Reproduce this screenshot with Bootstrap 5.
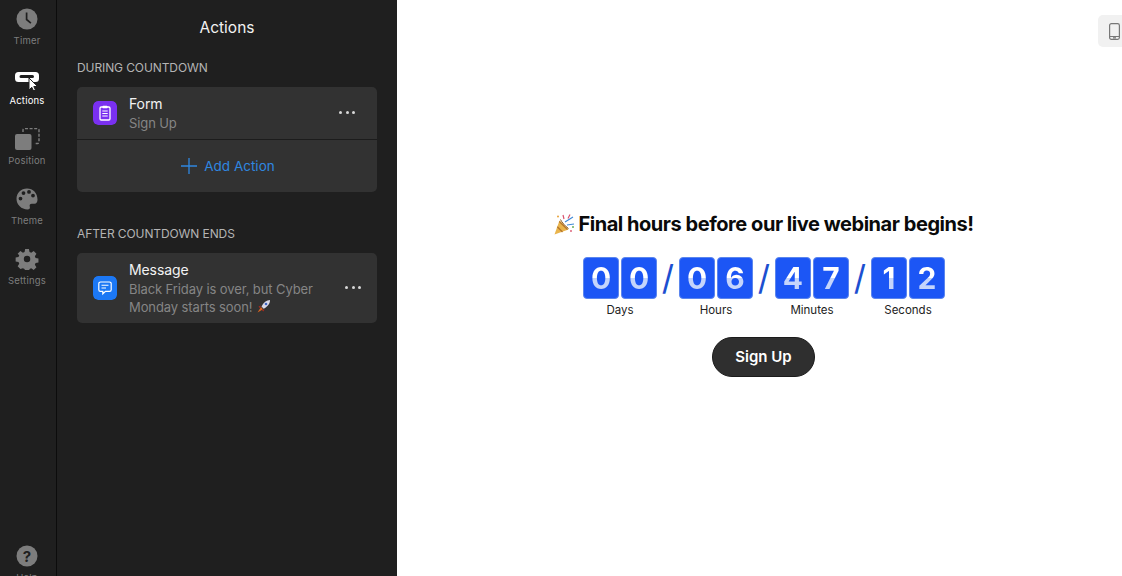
<!DOCTYPE html>
<html lang="en">
<head>
<meta charset="utf-8">
<title>Actions</title>
<link href="https://cdn.jsdelivr.net/npm/bootstrap@5.3.0/dist/css/bootstrap.min.css" rel="stylesheet">
<style>
html,body{height:100%;overflow:hidden}
body{font-family:Inter,"Liberation Sans",sans-serif;background:#fff}
.shell{height:576px;overflow:hidden}
.rail{width:57px;flex:none;background:#1f1f1f;border-right:1px solid #0c0c0c;height:576px;padding-right:2px}
.rail-item{height:60px;flex:none;color:#7d7d7d;font-size:9.5px;letter-spacing:.2px;line-height:12px;padding-top:8px}
.rail-item svg{display:block;height:22px;margin-bottom:5px}
.rail-item.is-on{color:#fff}
.rail-help{margin-bottom:-21px}
.panel{width:340px;flex:none;background:#1f1f1f;height:576px;padding:0 20px}
.panel-title{height:55px;color:#f2f2f2;font-size:15.5px;line-height:55px}
.sect-label{color:#b4b4b4;font-size:12px;line-height:15px;margin:5px 0 12px;letter-spacing:-.1px}
.sect-after{margin-top:34px}
.act-card{background:#323232;border-radius:5px;width:300px}
.act-row{padding:0 16px;gap:12px}
.act-form{height:52px}
.act-msg{height:70px}
.act-msg-text{width:208px}
.act-icon{width:24px;height:24px;border-radius:5px;flex:none}
.act-name{color:#f2f2f2;font-size:14px;line-height:20px;letter-spacing:-.1px}
.act-sub{color:#858585;font-size:13px;line-height:18px;letter-spacing:-.1px}
.act-more{flex:none;gap:3.5px;margin-left:auto;margin-top:-2px}
.act-form .act-more{margin-right:6px}
.act-more i{width:3px;height:3px;border-radius:50%;background:#d8d8d8;display:block}
.act-add{color:#2f87e0;font-size:13.5px;height:53px;gap:7px;border-top:1px solid #1c1c1c;padding-left:2px}
.stage{flex:1;position:relative;height:576px;background:#fff;padding:212px 0 0 9px}
.device-btn{position:absolute;top:15px;right:0;width:24px;height:32px;background:#f1f1f1;border-radius:5px 0 0 5px;padding-left:8px}
.cd-head{color:#0a0a0a;font-size:20px;font-weight:700;line-height:24px;letter-spacing:-.45px;gap:2px;margin-left:-1px}
.cd-row{margin-top:21px}
.cd-unit{width:74px}
.cd-tiles{gap:2px}
.cd-tile{width:36px;height:42px;background:#1c56f5;border:1px solid #5b86ee;border-radius:4px;font-size:30px;font-weight:700;line-height:40px}
.cd-digit{background:linear-gradient(#fff 50%,#c5d5fb 50%);-webkit-background-clip:text;background-clip:text;color:transparent}
.cd-cap{color:#222;font-size:11.5px;line-height:14px;margin-top:4px}
.cd-slash{width:22px;color:#1c4fd0;font-size:34px;line-height:42px;height:42px;font-weight:400}
.cd-btn{background:#2f2f2f;color:#fff;font-size:15px;font-weight:600;border:1px solid #1b1b1b;border-radius:20px;width:103px;height:40px;margin:20px 1px 0 0;padding:0;line-height:38px}
.cd-btn:hover{background:#2f2f2f;color:#fff}
.rocket{vertical-align:-2px}
</style>
</head>
<body>
<div class="shell d-flex">
  <nav class="rail d-flex flex-column align-items-center">
    <div class="rail-item w-100 text-center">
      <svg class="w-100" viewBox="0 0 22 22"><circle cx="11" cy="11" r="10.5" fill="#7d7d7d"/><path d="M10.6 4.500v7l4.300 3.600" fill="none" stroke="#1f1f1f" stroke-width="1.700"/></svg>
      Timer
    </div>
    <div class="rail-item is-on w-100 text-center">
      <svg class="w-100" viewBox="0 0 26 22"><path fill-rule="evenodd" fill="#fff" d="M4.500 4h17A3.500 3.500 0 0 1 25 7.500v3a3.500 3.500 0 0 1-3.500 3.500h-17A3.500 3.500 0 0 1 1 10.500v-3A3.500 3.500 0 0 1 4.500 4zM7 7a1.500 1.500 0 0 0 0 3h11.500a1.500 1.500 0 0 0 0-3z"/><path d="M15 10v12l2.800-2.700 1.900 4 1.900-.9-1.800-3.900h3.800z" fill="#fff" stroke="#1f1f1f" stroke-width="1"/></svg>
      Actions
    </div>
    <div class="rail-item w-100 text-center">
      <svg class="w-100" viewBox="0 0 26 22"><rect x="1" y="6" width="16.500" height="16" rx="2" fill="#7d7d7d"/><path d="M9 4V2a1.500 1.500 0 0 1 1.500-1.500h13A1.500 1.500 0 0 1 25 2v12a1.500 1.500 0 0 1-1.500 1.500H20" fill="none" stroke="#7d7d7d" stroke-width="1.400" stroke-dasharray="3 1.600"/></svg>
      Position
    </div>
    <div class="rail-item w-100 text-center">
      <svg class="w-100" viewBox="0 0 22 22"><path fill-rule="evenodd" fill="#7d7d7d" d="M11 .5C5 .5.500 5 .500 10.800.500 16.800 5.500 21.500 11.500 21.500c2 0 2.800-1.300 2.300-2.800-.6-1.700.3-3 2-3h2.700c2 0 3-1.600 3-4.200C21.500 5 17 .5 11 .5zM4.500 12.500a1.900 1.900 0 1 1 0-3.800 1.900 1.900 0 0 1 0 3.800zM7.500 7a1.900 1.900 0 1 1 0-3.800A1.900 1.900 0 0 1 7.500 7zm5.500-1.200a1.900 1.900 0 1 1 0-3.800 1.900 1.900 0 0 1 0 3.800zM17 9.500a1.900 1.900 0 1 1 0-3.800 1.900 1.900 0 0 1 0 3.800z"/></svg>
      Theme
    </div>
    <div class="rail-item w-100 text-center">
      <svg class="w-100" viewBox="0 0 22 22"><path fill="#7d7d7d" fill-rule="evenodd" d="M9 .5h4l.6 3 1.800.8 2.600-1.700 2.900 2.900-1.700 2.600.8 1.800 3 .6v4l-3 .6-.8 1.800 1.700 2.600-2.900 2.900-2.600-1.700-1.800.8-.6 3H9l-.6-3-1.800-.8L4 21.400l-2.900-2.900 1.700-2.600-.8-1.800-3-.6v-4l3-.6.8-1.800L1.100 5.500 4 2.600l2.600 1.700 1.800-.8zM11 7.600a3.400 3.400 0 1 0 0 6.800 3.400 3.400 0 0 0 0-6.800z" transform="translate(.6 .6) scale(.95)"/></svg>
      Settings
    </div>
    <div class="rail-item rail-help w-100 text-center mt-auto">
      <svg class="w-100" viewBox="0 0 22 22"><circle cx="11" cy="11" r="10.500" fill="#7d7d7d"/><text x="11" y="16.500" text-anchor="middle" font-family="Inter,sans-serif" font-size="15" font-weight="700" fill="#1f1f1f">?</text></svg>
      Help
    </div>
  </nav>

  <aside class="panel">
    <div class="panel-title text-center">Actions</div>
    <div class="sect-label text-uppercase">During countdown</div>
    <div class="act-card">
      <div class="act-row act-form d-flex align-items-center">
        <svg class="act-icon" viewBox="0 0 24 24"><rect width="24" height="24" rx="5" fill="#7a30f0"/><rect x="7" y="6" width="10" height="13" rx="1.200" fill="none" stroke="#fff" stroke-width="1.300"/><rect x="9.500" y="4.800" width="5" height="2.400" rx=".6" fill="#fff"/><path d="M9.300 10h5.400M9.300 12.500h5.400M9.300 15h5.400" stroke="#fff" stroke-width="1.100"/></svg>
        <div>
          <div class="act-name">Form</div>
          <div class="act-sub">Sign Up</div>
        </div>
        <div class="act-more d-flex"><i></i><i></i><i></i></div>
      </div>
      <div class="act-add d-flex align-items-center justify-content-center">
        <svg width="16" height="16" viewBox="0 0 16 16"><path d="M8 0v16M0 8h16" stroke="#2f87e0" stroke-width="1.300"/></svg>
        <span>Add Action</span>
      </div>
    </div>

    <div class="sect-label sect-after text-uppercase">After countdown ends</div>
    <div class="act-card">
      <div class="act-row act-msg d-flex align-items-center">
        <svg class="act-icon" viewBox="0 0 24 24"><rect width="24" height="24" rx="5" fill="#1c78f5"/><path d="M7.500 6h9A1.700 1.700 0 0 1 18.200 7.700v6a1.700 1.700 0 0 1-1.700 1.700h-4l-2.700 2.400v-2.400H7.500a1.700 1.700 0 0 1-1.700-1.700v-6A1.700 1.700 0 0 1 7.500 6z" fill="none" stroke="#fff" stroke-width="1.200"/><path d="M8.500 9.200h7M8.500 12h4.500" stroke="#fff" stroke-width="1.100"/></svg>
        <div class="act-msg-text">
          <div class="act-name">Message</div>
          <div class="act-sub">Black Friday is over, but Cyber Monday starts soon!
            <svg class="rocket" width="15" height="15" viewBox="0 0 15 15"><path d="M14 1C10.500 1.200 7.500 3.500 5.500 7.500L7.700 9.700C11.500 7.800 14 4.800 14 1z" fill="#d8d8e8"/><circle cx="10" cy="5" r="1.300" fill="#3f68c4"/><path d="M5 8L1.500 13.500 7 10.200z" fill="#d8641e"/><path d="M4.800 6.500L2.500 7.500 4 9.200zM8.500 10.200L7.500 12.500 5.800 11z" fill="#a82a20"/></svg>
          </div>
        </div>
        <div class="act-more d-flex"><i></i><i></i><i></i></div>
      </div>
    </div>
  </aside>

  <main class="stage d-flex flex-column align-items-center">
    <div class="device-btn d-flex align-items-center justify-content-center">
      <svg width="11" height="17" viewBox="0 0 11 17"><rect x=".6" y=".6" width="9.800" height="15.800" rx="1.800" fill="none" stroke="#777" stroke-width="1.200"/><path d="M1 13.500h9" stroke="#777"/><rect x="4" y="14.200" width="3" height="1.300" fill="#777"/></svg>
    </div>
    <div class="cd-head d-flex align-items-center">
      <svg width="23" height="23" viewBox="0 0 23 23"><path d="M1.500 21.500L6.500 7.500 15.500 16.500z" fill="#e9b44c"/><path d="M4.300 13.800L9.500 19M6.300 8.500L14.500 16.500" stroke="#b5762a" stroke-width="1.300"/><path d="M7.500 6.500C8.500 9 12.500 13.500 15.500 15.500" fill="none" stroke="#8a5a20" stroke-width="1"/><path d="M12 9L20 4M14 12l7-1" stroke="#3f8ad8" stroke-width="1.200"/><path d="M10 2l1 4M17 1.500l-2 4" stroke="#d9546e" stroke-width="1.200"/><circle cx="20" cy="14" r="1" fill="#6bb05a"/><circle cx="5" cy="3.500" r="1" fill="#e8a23a"/><circle cx="18" cy="18" r=".9" fill="#d9546e"/></svg>
      <span>Final hours before our live webinar begins!</span>
    </div>
    <div class="cd-row d-flex">
      <div class="cd-unit text-center">
        <div class="cd-tiles d-flex"><div class="cd-tile"><span class="cd-digit">0</span></div><div class="cd-tile"><span class="cd-digit">0</span></div></div>
        <div class="cd-cap">Days</div>
      </div>
      <div class="cd-slash text-center">/</div>
      <div class="cd-unit text-center">
        <div class="cd-tiles d-flex"><div class="cd-tile"><span class="cd-digit">0</span></div><div class="cd-tile"><span class="cd-digit">6</span></div></div>
        <div class="cd-cap">Hours</div>
      </div>
      <div class="cd-slash text-center">/</div>
      <div class="cd-unit text-center">
        <div class="cd-tiles d-flex"><div class="cd-tile"><span class="cd-digit">4</span></div><div class="cd-tile"><span class="cd-digit">7</span></div></div>
        <div class="cd-cap">Minutes</div>
      </div>
      <div class="cd-slash text-center">/</div>
      <div class="cd-unit text-center">
        <div class="cd-tiles d-flex"><div class="cd-tile"><span class="cd-digit">1</span></div><div class="cd-tile"><span class="cd-digit">2</span></div></div>
        <div class="cd-cap">Seconds</div>
      </div>
    </div>
    <button type="button" class="btn cd-btn">Sign Up</button>
  </main>
</div>
<script src="https://cdn.jsdelivr.net/npm/bootstrap@5.3.0/dist/js/bootstrap.bundle.min.js"></script>
</body>
</html>
